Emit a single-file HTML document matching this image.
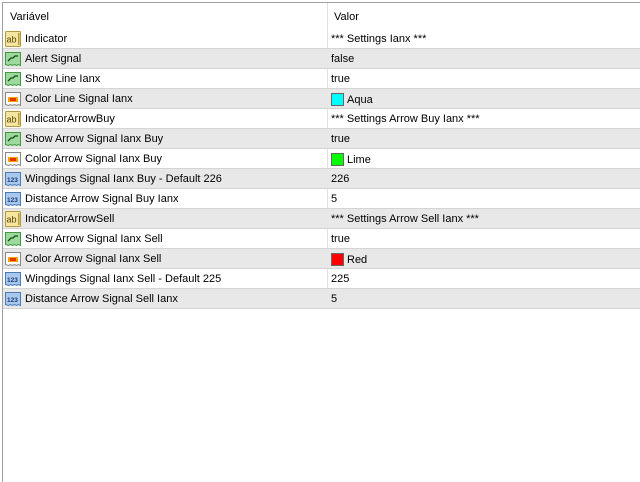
<!DOCTYPE html>
<html><head><meta charset="utf-8"><style>
*{margin:0;padding:0;box-sizing:border-box}
body{width:640px;height:480px;background:#fff;font-family:"Liberation Sans",sans-serif;font-size:11px;color:#000;position:relative;overflow:hidden}
#frame{position:absolute;left:2px;top:2px;width:640px;height:480px;border-left:1px solid #a0a0a0;border-top:1px solid #a0a0a0}
.hdr{position:absolute;left:3px;top:3px;width:637px;height:26px}
.hdr span{position:absolute;top:8px}
.sep{position:absolute;left:327px;top:3px;width:1px;height:306px;background:#e0e0e0}
.row{position:absolute;left:3px;width:637px;height:20px;border-bottom:1px solid #d4d4d4}
.row.g{background:#e8e8e8}
.row svg{position:absolute;left:2px;top:2px}
.row .n{position:absolute;left:22px;top:4px;white-space:nowrap}
.row .v{position:absolute;left:328px;top:4px;white-space:nowrap}
.sw{display:inline-block;width:13px;height:13px;border:1px solid #666;vertical-align:-3px;margin-right:3px}
</style></head><body>
<div id="frame"></div>
<div class="hdr"><span style="left:7px">Variável</span><span style="left:331px">Valor</span></div>
<div class="sep"></div>
<svg width="0" height="0" style="position:absolute"><defs>
<g id="ab"><rect x="0.5" y="0.5" width="15" height="15" rx="1" fill="#f3e6a0" stroke="#b49a3a"/><text x="1.5" y="11.5" font-size="9" font-family="Liberation Sans" fill="#5a4300">ab</text><rect x="13" y="2" width="1.5" height="12" fill="#b49a3a"/></g>
<g id="bo"><path d="M0.5 1.5h15v13l-2-1-2 1-2-1-2 1-2-1-2 1-3-1z" fill="#9ed89e" stroke="#3f9a3f"/><path d="M3 10l3-3h2l2-2h3" stroke="#0d4d0d" stroke-width="1.3" fill="none"/></g>
<g id="co"><path d="M0.5 1.5h15v13l-2-1-2 1-2-1-2 1-2-1-2 1-3-1z" fill="#fafafa" stroke="#888"/><rect x="3" y="6" width="10" height="5" fill="#f7a200"/><rect x="5" y="7" width="6" height="3" fill="#e83000"/></g>
<g id="nu"><path d="M0.5 1.5h15v13l-2-1-2 1-2-1-2 1-2-1-2 1-3-1z" fill="#a8c8ec" stroke="#4a7ab8"/><text x="2" y="11" font-size="6.5" font-weight="bold" font-family="Liberation Sans" fill="#1a3a7a">123</text></g>
</defs></svg>

<div class="row" style="top:29px"><svg width="17" height="17"><use href="#ab"/></svg><span class="n">Indicator</span><span class="v">*** Settings Ianx ***</span></div>
<div class="row g" style="top:49px"><svg width="17" height="17"><use href="#bo"/></svg><span class="n">Alert Signal</span><span class="v">false</span></div>
<div class="row" style="top:69px"><svg width="17" height="17"><use href="#bo"/></svg><span class="n">Show Line Ianx</span><span class="v">true</span></div>
<div class="row g" style="top:89px"><svg width="17" height="17"><use href="#co"/></svg><span class="n">Color Line Signal Ianx</span><span class="v"><span class="sw" style="background:#00ffff"></span>Aqua</span></div>
<div class="row" style="top:109px"><svg width="17" height="17"><use href="#ab"/></svg><span class="n">IndicatorArrowBuy</span><span class="v">*** Settings Arrow Buy Ianx ***</span></div>
<div class="row g" style="top:129px"><svg width="17" height="17"><use href="#bo"/></svg><span class="n">Show Arrow Signal Ianx Buy</span><span class="v">true</span></div>
<div class="row" style="top:149px"><svg width="17" height="17"><use href="#co"/></svg><span class="n">Color Arrow Signal Ianx Buy</span><span class="v"><span class="sw" style="background:#00ff00"></span>Lime</span></div>
<div class="row g" style="top:169px"><svg width="17" height="17"><use href="#nu"/></svg><span class="n">Wingdings Signal Ianx Buy - Default 226</span><span class="v">226</span></div>
<div class="row" style="top:189px"><svg width="17" height="17"><use href="#nu"/></svg><span class="n">Distance Arrow Signal Buy Ianx</span><span class="v">5</span></div>
<div class="row g" style="top:209px"><svg width="17" height="17"><use href="#ab"/></svg><span class="n">IndicatorArrowSell</span><span class="v">*** Settings Arrow Sell Ianx ***</span></div>
<div class="row" style="top:229px"><svg width="17" height="17"><use href="#bo"/></svg><span class="n">Show Arrow Signal Ianx Sell</span><span class="v">true</span></div>
<div class="row g" style="top:249px"><svg width="17" height="17"><use href="#co"/></svg><span class="n">Color Arrow Signal Ianx Sell</span><span class="v"><span class="sw" style="background:#ff0000"></span>Red</span></div>
<div class="row" style="top:269px"><svg width="17" height="17"><use href="#nu"/></svg><span class="n">Wingdings Signal Ianx Sell - Default 225</span><span class="v">225</span></div>
<div class="row g" style="top:289px"><svg width="17" height="17"><use href="#nu"/></svg><span class="n">Distance Arrow Signal Sell Ianx</span><span class="v">5</span></div>
</body></html>
